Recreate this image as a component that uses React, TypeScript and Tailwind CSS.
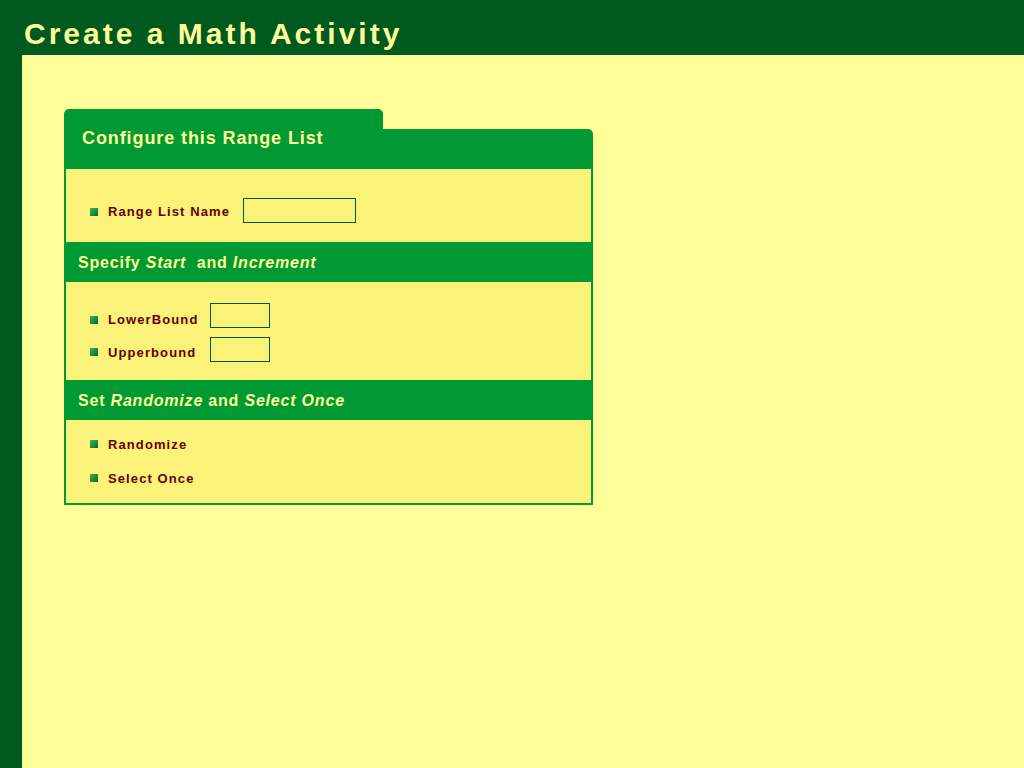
import React from "react";

const font = { fontFamily: '"Liberation Sans", Arial, sans-serif' };

function Bullet() {
  return <span className="block w-[8px] h-[8px] shrink-0 bg-gradient-to-br from-[#3cb35a] to-[#006b2c]" />;
}

function Label({ children }: { children: React.ReactNode }) {
  return (
    <span className="text-[13px] leading-[15px] font-bold tracking-[1.1px] text-[#660000] whitespace-nowrap">
      {children}
    </span>
  );
}

function Field({ w }: { w: string }) {
  return <input className={`${w} h-[25px] border border-[#005a1e] bg-[#fbf27a] outline-none`} />;
}

function SectionHeader({ children }: { children: React.ReactNode }) {
  return (
    <div className="h-[40px] bg-[#009933] flex items-center pl-[12px] pt-[2px] text-[16px] leading-[18px] font-bold tracking-[0.8px] text-[#ffff99] whitespace-nowrap">
      <span>{children}</span>
    </div>
  );
}

export default function App() {
  return (
    <div className="min-h-screen flex flex-col bg-[#ffff99]" style={font}>
      <header className="h-[55px] bg-[#00591f] pl-[24px] pt-[19px]">
        <h1 className="text-[30px] leading-[30px] font-bold tracking-[3px] text-[#ffff99]">Create a Math Activity</h1>
      </header>
      <div className="flex flex-1 min-h-[713px]">
        <aside className="w-[22px] bg-[#00591f]" />
        <main className="flex-1 pl-[42px] pt-[54px]">
          <div className="w-[529px]">
            <div className="w-[319px] h-[20px] bg-[#009933] rounded-t-[5px]" />
            <div className="h-[40px] bg-[#009933] rounded-tr-[5px] pl-[18px]">
              <h2 className="text-[18px] leading-[18px] font-bold tracking-[0.9px] text-[#ffff99]">Configure this Range List</h2>
            </div>
            <div className="border-x-2 border-b-2 border-[#009933] bg-[#fbf27a]">
              <div className="pt-[29px] pb-[19px] pl-[24px] flex items-center">
                <div className="flex items-center gap-[10px] w-[153px] pt-[2px]">
                  <Bullet />
                  <Label>Range List Name</Label>
                </div>
                <Field w="w-[113px]" />
              </div>
              <SectionHeader>
                Specify <i>Start</i>{"\u00a0\u00a0"}and <i>Increment</i>
              </SectionHeader>
              <div className="pt-[21px] pb-[18px] pl-[24px] flex flex-col gap-[9px]">
                <div className="flex items-center">
                  <div className="flex items-center gap-[10px] w-[120px] pt-[8px]">
                    <Bullet />
                    <Label>LowerBound</Label>
                  </div>
                  <Field w="w-[60px]" />
                </div>
                <div className="flex items-center">
                  <div className="flex items-center gap-[10px] w-[120px] pt-[5px]">
                    <Bullet />
                    <Label>Upperbound</Label>
                  </div>
                  <Field w="w-[60px]" />
                </div>
              </div>
              <SectionHeader>
                Set <i>Randomize</i> and <i>Select Once</i>
              </SectionHeader>
              <div className="pt-[14px] pb-[15px] pl-[24px] flex flex-col gap-[14px]">
                <div className="h-[20px] flex items-center gap-[10px]">
                  <Bullet />
                  <Label>Randomize</Label>
                </div>
                <div className="h-[20px] flex items-center gap-[10px]">
                  <Bullet />
                  <Label>Select Once</Label>
                </div>
              </div>
            </div>
          </div>
        </main>
      </div>
    </div>
  );
}
